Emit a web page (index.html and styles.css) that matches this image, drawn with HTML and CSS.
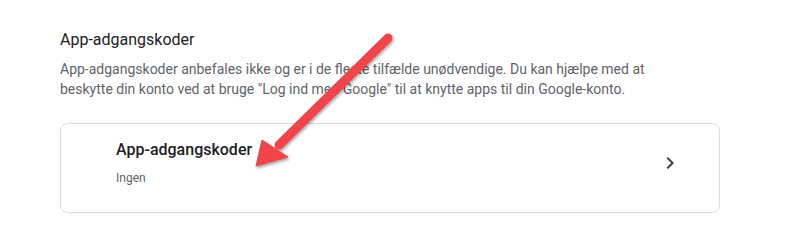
FILE: index.html
```html
<!DOCTYPE html>
<html lang="da">
<head>
<meta charset="utf-8">
<title>App-adgangskoder</title>
<link rel="stylesheet" href="styles.css">
</head>
<body>
<main class="page">
  <section class="section">
    <h2 class="section-title">App-adgangskoder</h2>
    <p class="section-desc">App-adgangskoder anbefales ikke og er i de fleste tilfælde unødvendige. Du kan hjælpe med at beskytte din konto ved at bruge "Log ind med Google" til at knytte apps til din Google-konto.</p>
    <a class="card" href="#">
      <div class="card-text">
        <div class="card-title">App-adgangskoder</div>
        <div class="card-sub">Ingen</div>
      </div>
      <svg class="chevron" viewBox="0 0 24 24" width="24" height="24" aria-hidden="true"><path d="M10 6L8.59 7.41 13.17 12l-4.58 4.59L10 18l6-6z"/></svg>
    </a>
  </section>
  <svg class="annotation" width="788" height="246" viewBox="0 0 788 246" aria-hidden="true">
    <g class="arrow">
      <line x1="388" y1="38" x2="279" y2="145" />
      <polygon points="256,166 262,140 288,157" />
    </g>
  </svg>
</main>
</body>
</html>
```
FILE: styles.css
```css
html, body {
  margin: 0;
  padding: 0;
  background: #ffffff;
}
body {
  font-family: Roboto, "Noto Sans", Arial, sans-serif;
  color: #202124;
}
.page {
  position: relative;
  width: 788px;
  height: 246px;
  overflow: hidden;
}
.section {
  padding: 28px 0 0 60px;
  width: 660px;
}
.section-title {
  margin: 0;
  font-size: 16px;
  line-height: 24px;
  font-weight: 400;
  color: #202124;
}
.section-desc {
  margin: 7px 0 0 0;
  font-size: 14px;
  line-height: 20px;
  color: #5f6368;
  width: 610px;
}
.card {
  margin-top: 24px;
  display: flex;
  align-items: flex-start;
  border: 1px solid #dadce0;
  border-radius: 8px;
  padding: 14px 37px 26px 55px;
  height: 48px;
  text-decoration: none;
  color: inherit;
}
.card-text {
  flex: 1;
  display: flex;
  flex-direction: column;
  gap: 8px;
}
.card-title {
  font-size: 16px;
  line-height: 24px;
  font-weight: 500;
  color: #202124;
}
.card-sub {
  font-size: 12px;
  line-height: 16px;
  color: #5f6368;
}
.chevron {
  margin-top: 13px;
  fill: #3c4043;
}
.annotation {
  position: absolute;
  left: 0;
  top: 0;
  pointer-events: none;
}
.arrow {
  filter: drop-shadow(1px 2px 1.5px rgba(0, 0, 0, 0.35));
}
.arrow line {
  stroke: #f2444b;
  stroke-width: 9;
  stroke-linecap: round;
}
.arrow polygon {
  fill: #f2444b;
  stroke: #f2444b;
  stroke-width: 1;
  stroke-linejoin: round;
}
```
